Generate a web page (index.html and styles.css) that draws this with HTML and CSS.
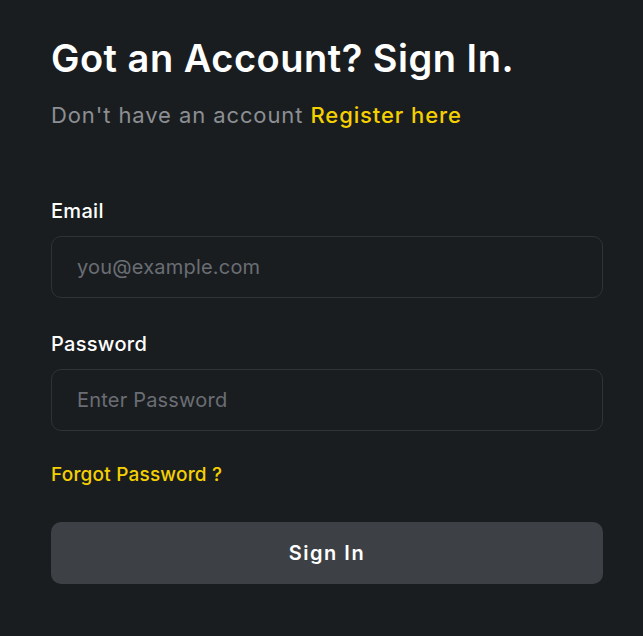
FILE: index.html
```html
<!DOCTYPE html>
<html>
<head>
<meta charset="utf-8">
<link rel="stylesheet" href="styles.css">
</head>
<body>
<main class="card">
  <h1 class="title">Got an Account? Sign In.</h1>
  <p class="subtitle">Don't have an account <a class="link" href="#">Register here</a></p>
  <form class="form">
    <label class="field">
      <span class="label">Email</span>
      <input class="input" type="email" placeholder="you@example.com">
    </label>
    <label class="field">
      <span class="label">Password</span>
      <input class="input" type="password" placeholder="Enter Password">
    </label>
    <a class="forgot" href="#">Forgot Password ?</a>
    <button class="btn" type="button">Sign In</button>
  </form>
</main>
</body>
</html>
```
FILE: styles.css
```css
html, body {
  margin: 0;
  padding: 0;
  background: #1a1d20;
  height: 100%;
}
body {
  font-family: Inter, "Open Sans", sans-serif;
  color: #ffffff;
}
.card {
  padding: 34px 40px 0 51px;
  width: 552px;
}
.title {
  margin: 0;
  font-size: 38px;
  font-weight: 600;
  line-height: 48px;
  letter-spacing: 0.5px;
}
.subtitle {
  margin: 18px 0 0;
  font-size: 22px;
  line-height: 30px;
  letter-spacing: 0.9px;
  color: #8c8f93;
}
.link {
  color: #f5d000;
  text-decoration: none;
  font-weight: 500;
}
.form {
  display: flex;
  flex-direction: column;
  margin-top: 68px;
}
.field {
  display: flex;
  flex-direction: column;
  gap: 12px;
  margin-bottom: 33px;
}
.field:last-of-type {
  margin-bottom: 23px;
}
.label {
  font-size: 20px;
  line-height: 26px;
  font-weight: 500;
  letter-spacing: 0.3px;
  color: #ffffff;
}
.input {
  box-sizing: border-box;
  height: 62px;
  width: 100%;
  background: #1a1d20;
  border: 1px solid #2f3236;
  border-radius: 10px;
  padding: 0 25px;
  font-family: inherit;
  font-size: 20px;
  letter-spacing: 0.2px;
  color: #ffffff;
  outline: none;
}
.input::placeholder {
  color: #6a6e74;
}
.forgot {
  color: #f5d000;
  text-decoration: none;
  font-size: 19px;
  line-height: 26px;
  font-weight: 500;
  letter-spacing: 0.2px;
  margin-top: 8px;
  align-self: flex-start;
}
.btn {
  margin-top: 34px;
  height: 62px;
  border: 0;
  border-radius: 10px;
  background: #3d4045;
  color: #ffffff;
  font-family: inherit;
  font-size: 20px;
  font-weight: 600;
  letter-spacing: 1.5px;
}
```
